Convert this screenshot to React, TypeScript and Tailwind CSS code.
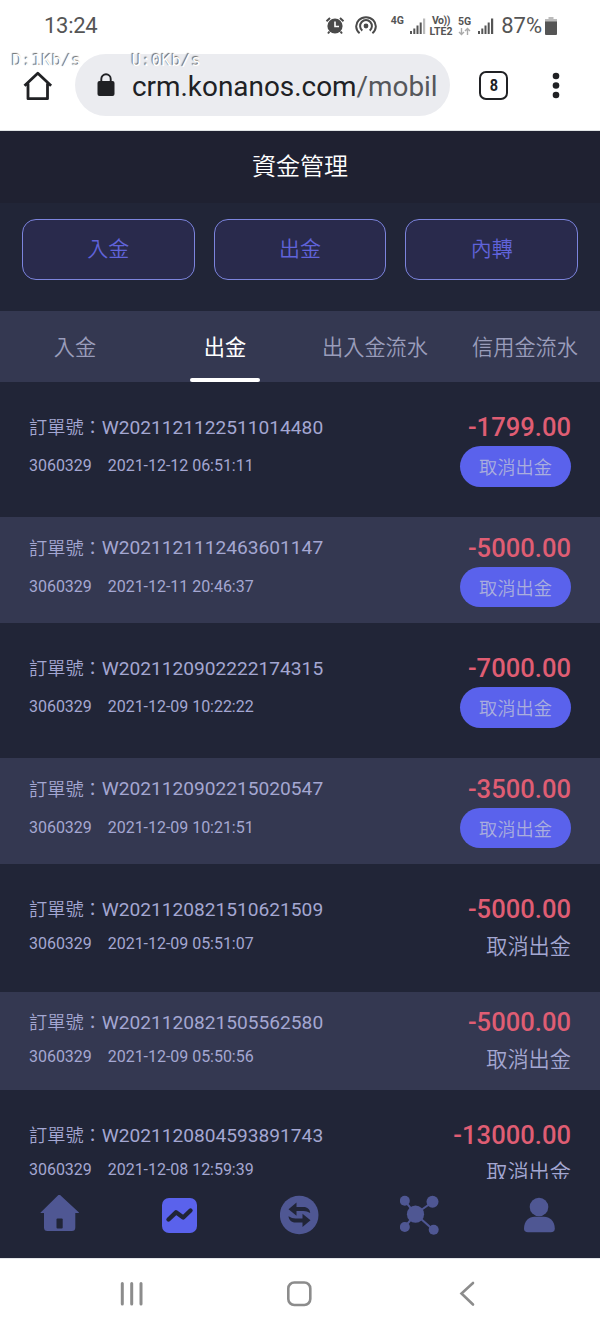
import { useState } from 'react';

type Order = {
  id: string;
  time: string;
  amount: string;
  pending: boolean;
};

const account = '3060329';

const orders: Order[] = [
  { id: 'W2021121122511014480', time: '2021-12-12 06:51:11', amount: '-1799.00', pending: true },
  { id: 'W2021121112463601147', time: '2021-12-11 20:46:37', amount: '-5000.00', pending: true },
  { id: 'W2021120902222174315', time: '2021-12-09 10:22:22', amount: '-7000.00', pending: true },
  { id: 'W2021120902215020547', time: '2021-12-09 10:21:51', amount: '-3500.00', pending: true },
  { id: 'W2021120821510621509', time: '2021-12-09 05:51:07', amount: '-5000.00', pending: false },
  { id: 'W2021120821505562580', time: '2021-12-09 05:50:56', amount: '-5000.00', pending: false },
  { id: 'W2021120804593891743', time: '2021-12-08 12:59:39', amount: '-13000.00', pending: false },
];

const actions = ['入金', '出金', '內轉'];
const tabs = ['入金', '出金', '出入金流水', '信用金流水'];

function Signal({ faded }: { faded?: boolean }) {
  return (
    <svg width="16" height="17" viewBox="0 0 16 17" fill="#555">
      <rect x="0" y="13" width="2" height="3" />
      <rect x="3.3" y="10.5" width="2" height="5.5" />
      <rect x="6.5" y="7.5" width="2" height="8.5" />
      <rect x="9.7" y="4.5" width="2" height="11.5" />
      <rect x="13" y="0.5" width="2.2" height="15.5" fill={faded ? '#bbb' : '#555'} />
    </svg>
  );
}

function StatusBar() {
  return (
    <div className="flex h-[52px] items-center pl-[44px] pr-[43px] text-[#555]">
      <span className="text-[22px] leading-none tracking-[-0.3px]">13:24</span>
      <svg className="ml-auto" width="20" height="20" viewBox="0 0 20 20" fill="none" stroke="#4a4a4a">
        <circle cx="10" cy="10" r="7.6" fill="#4a4a4a" stroke="none" />
        <path d="M1.5 5.2 5 2M18.5 5.2 15 2M4.5 15.5 3 17.5M15.5 15.5l1.5 2" strokeWidth="2" />
        <path d="M10 5.5v5h4" stroke="#fff" strokeWidth="1.6" />
      </svg>
      <svg className="ml-[10px]" width="22" height="20" viewBox="0 0 22 20" fill="none" stroke="#4a4a4a" strokeWidth="2">
        <circle cx="11" cy="10" r="2.4" fill="#4a4a4a" stroke="none" />
        <path d="M4.6 17.3A9.8 9.2 0 1 1 17.4 17.3" />
        <path d="M7.3 14.6A5.9 5.9 0 1 1 14.7 14.6" />
      </svg>
      <span className="mb-[10px] ml-[14px] text-[10.5px] font-bold leading-none">4G</span>
      <div className="ml-[6px]">
        <Signal faded />
      </div>
      <div className="ml-[3px] flex w-[24px] flex-col items-center text-[10.5px] font-bold">
        <span className="leading-[11px] tracking-[-0.5px]">Vo))</span>
        <span className="leading-[11px]">LTE2</span>
      </div>
      <div className="ml-[5px] flex flex-col items-center">
        <span className="text-[10.5px] font-bold leading-[11px]">5G</span>
        <svg width="13" height="9" viewBox="0 0 13 9" fill="none" stroke="#aaa" strokeWidth="1.4">
          <path d="M3.5 1v6.5M1 5l2.5 2.5L6 5M9.5 8V1.5M7 4l2.5-2.5L12 4" />
        </svg>
      </div>
      <div className="ml-[7px]">
        <Signal />
      </div>
      <span className="ml-[7px] text-[22px] leading-none">87%</span>
      <svg className="ml-[3px]" width="12" height="18" viewBox="0 0 12 18">
        <path d="M3.5 0h5v2H12v3H0V2h3.5z" fill="#bbb" />
        <path d="M0 4.5h12V17a1 1 0 0 1-1 1H1a1 1 0 0 1-1-1z" fill="#555" />
      </svg>
    </div>
  );
}

function AddressBar() {
  return (
    <div className="flex h-[79px] items-start border-b border-[#dfe3e5] pl-[22px] pr-[40px] pt-[2px]">
      <svg className="mt-[16px]" width="32" height="32" viewBox="0 0 32 32" fill="none" stroke="#202124" strokeWidth="2.8" strokeLinejoin="round">
        <path d="M2.5 15.8 15.8 3.2l13.3 12.6M6 13.5V28.7h19.5V13.5" />
      </svg>
      <div className="ml-[21px] flex h-[62px] w-[375px] items-center rounded-full bg-[#ebecf0] pl-[22px]">
        <svg width="18" height="24" viewBox="0 0 18 24">
          <rect x="0.5" y="8" width="17" height="15" rx="2" fill="#202124" />
          <path d="M4.3 9V6a4.7 4.7 0 0 1 9.4 0v3" fill="none" stroke="#202124" strokeWidth="1.9" />
        </svg>
        <span className="ml-[17px] mt-[3px] text-[27.9px] leading-none text-[#202124]">
          crm.konanos.com<span className="text-[#55575b]">/mobil</span>
        </span>
      </div>
      <div className="ml-[29px] mt-[17px] flex h-[29px] w-[29px] items-center justify-center rounded-[7px] border-[2.5px] border-[#202124] text-[#202124]">
        <span className="scale-x-[0.85] text-[17px] font-bold leading-none">8</span>
      </div>
      <svg className="ml-auto mt-[17px]" width="8" height="30" viewBox="0 0 8 30" fill="#202124">
        <circle cx="4" cy="5" r="3.3" />
        <circle cx="4" cy="14.5" r="3.3" />
        <circle cx="4" cy="24" r="3.3" />
      </svg>
    </div>
  );
}

function OrderRow({ order, shaded }: { order: Order; shaded: boolean }) {
  return (
    <div
      className={`flex shrink-0 justify-between px-[29px] ${
        shaded ? 'bg-[#343851] pb-[16px] pt-[16.5px]' : 'pb-[30.5px] pt-[31px]'
      }`}
    >
      <div className="text-[#a4a7d2]">
        <div className="flex h-[29px] items-center pt-px">
          <span className="text-[18.2px] font-[350]">訂單號：</span>
          <span className="text-[19.15px]">{order.id}</span>
        </div>
        <div
          className={`flex gap-4 text-base leading-[20px] tracking-[-0.03px] ${
            order.pending ? 'mt-[14px]' : 'mt-[10px]'
          }`}
        >
          <span>{account}</span>
          <span>{order.time}</span>
        </div>
      </div>
      <div className="flex flex-col items-end">
        <span className="h-[33px] text-[25.6px] font-medium leading-[29px] text-[#df5d73]">{order.amount}</span>
        {order.pending ? (
          <button className="h-[40.5px] w-[111px] rounded-full bg-[#5a62ec] pt-[3px] text-[18.2px] font-[350] text-[#aaaedd]">
            取消出金
          </button>
        ) : (
          <span className="h-[33px] text-[21.2px] font-[350] leading-[37px] text-[#a4a7d2]">取消出金</span>
        )}
      </div>
    </div>
  );
}

function BottomNav() {
  return (
    <nav className="flex h-[79px] shrink-0 items-start bg-[#212537] pt-[16px] text-[#4f5793]">
      <div className="flex w-[120px] justify-center">
        <svg width="40" height="40" viewBox="0 0 40 40" fill="currentColor">
          <path d="M19.2 -0.8 38.7 17.2Q39.5 18 38 18H35.3V32.5a3.5 3.5 0 0 1-3.5 3.5H7.5A3.5 3.5 0 0 1 4 32.5V18H1.3Q-.1 18 .9 17.2z" />
          <rect x="16.5" y="23.5" width="6.2" height="10" rx="1" fill="#212537" />
        </svg>
      </div>
      <div className="flex w-[120px] justify-center">
        <svg width="40" height="40" viewBox="0 0 40 40">
          <rect x="2" y="3" width="35" height="35" rx="7" fill="#5a62ec" />
          <path d="M8.5 24.5 16 17.3 23.2 22.5 30.5 15.5" fill="none" stroke="#212537" strokeWidth="4.4" strokeLinecap="round" strokeLinejoin="round" />
        </svg>
      </div>
      <div className="flex w-[120px] justify-center">
        <svg width="40" height="40" viewBox="0 0 40 40">
          <circle cx="19.2" cy="20" r="19.3" fill="currentColor" />
          <path d="M8.5 14.3 16.5 7.5V12H23.5C27.5 12 30 14.5 30.2 18Q27 16 23.5 16H16.5V20.8zM30.5 25.3 22.5 32V27.6H15.5C11.5 27.6 8.7 25 8.5 21.3Q12 23.6 15.5 23.6H22.5V18.8z" fill="#212537" />
        </svg>
      </div>
      <div className="flex w-[120px] justify-center">
        <svg width="40" height="40" viewBox="0 0 40 40" fill="currentColor">
          <path d="M4.8 5.8 15.5 19 4.8 32M32.5 7 15.5 19 33.5 35" fill="none" stroke="currentColor" strokeWidth="2" />
          <circle cx="4.8" cy="5.8" r="5" />
          <circle cx="32.5" cy="6.8" r="6" />
          <circle cx="15.5" cy="19.2" r="8.6" />
          <circle cx="4.8" cy="32" r="5" />
          <circle cx="33.7" cy="34.8" r="5" />
        </svg>
      </div>
      <div className="flex w-[120px] justify-center">
        <svg width="40" height="40" viewBox="0 0 40 40" fill="currentColor">
          <circle cx="19" cy="12" r="9.3" />
          <path d="M4 33.5C4 26 9 21.7 14.5 21.7h9.5C29.5 21.7 34.8 26 34.8 33.5q0 3.8-4 3.8H8q-4 0-4-3.8z" />
        </svg>
      </div>
    </nav>
  );
}

function SystemNav() {
  return (
    <div className="flex h-[75px] shrink-0 items-start border-t border-[#e4e6ea] bg-white pt-[20px]">
      <svg className="ml-[118px]" width="28" height="30" viewBox="0 0 28 30" stroke="#8c8c8c" strokeWidth="3" strokeLinecap="round">
        <path d="M4.3 4.5V25M13.7 4.5V25M23 4.5V25" />
      </svg>
      <svg className="ml-[140px]" width="28" height="30" viewBox="0 0 28 30" fill="none" stroke="#8c8c8c" strokeWidth="2.6">
        <rect x="2.3" y="3.5" width="22" height="22.5" rx="6" />
      </svg>
      <svg className="ml-[139px]" width="28" height="30" viewBox="0 0 28 30" fill="none" stroke="#8c8c8c" strokeWidth="2.6">
        <path d="M20 4 8.5 14.5 20 25.5" strokeLinecap="round" />
      </svg>
    </div>
  );
}

export default function App() {
  const [activeTab, setActiveTab] = useState(1);

  return (
    <div className="relative flex h-[1333px] w-[600px] flex-col overflow-hidden bg-white font-['Roboto','Noto_Sans_CJK_TC',sans-serif]">
      <StatusBar />
      <AddressBar />
      {/* network speed overlay */}
      <div className="absolute left-[12px] top-[51px] flex gap-[50px] font-['DejaVu_Sans_Mono',monospace] text-[16.5px] leading-[20px] text-white [text-shadow:-1px_-1px_1px_#666]">
        <span>D:1Kb/s</span>
        <span>U:0Kb/s</span>
      </div>

      <div className="flex min-h-0 flex-1 flex-col bg-[#212537]">
        <h1 className="h-[72px] shrink-0 bg-[#1f2131] text-center text-2xl font-[350] leading-[72px] text-white">資金管理</h1>
        <div className="flex shrink-0 gap-[19px] px-[22px] pb-[31px] pt-[16px]">
          {actions.map((label) => (
            <button
              key={label}
              className="h-[61px] flex-1 rounded-[14px] border border-[#7c84dd] bg-[#292a4c] pt-px text-[21px] font-[350] text-[#6063da]"
            >
              {label}
            </button>
          ))}
        </div>
        <div className="flex h-[71px] shrink-0 bg-[#343851]">
          {tabs.map((label, i) => (
            <button
              key={label}
              onClick={() => setActiveTab(i)}
              className={`relative w-[150px] pt-[2px] text-[21.2px] ${
                i === activeTab ? 'font-normal text-white' : 'font-[350] text-[#9a9dbb]'
              }`}
            >
              {label}
              {i === activeTab && <span className="absolute bottom-0 left-[40px] h-[4px] w-[70px] rounded-sm bg-white" />}
            </button>
          ))}
        </div>
        <div className="flex min-h-0 flex-1 flex-col overflow-hidden">
          {orders.map((order, i) => (
            <OrderRow key={order.id} order={order} shaded={i % 2 === 1} />
          ))}
        </div>
      </div>

      <BottomNav />
      <SystemNav />
    </div>
  );
}
